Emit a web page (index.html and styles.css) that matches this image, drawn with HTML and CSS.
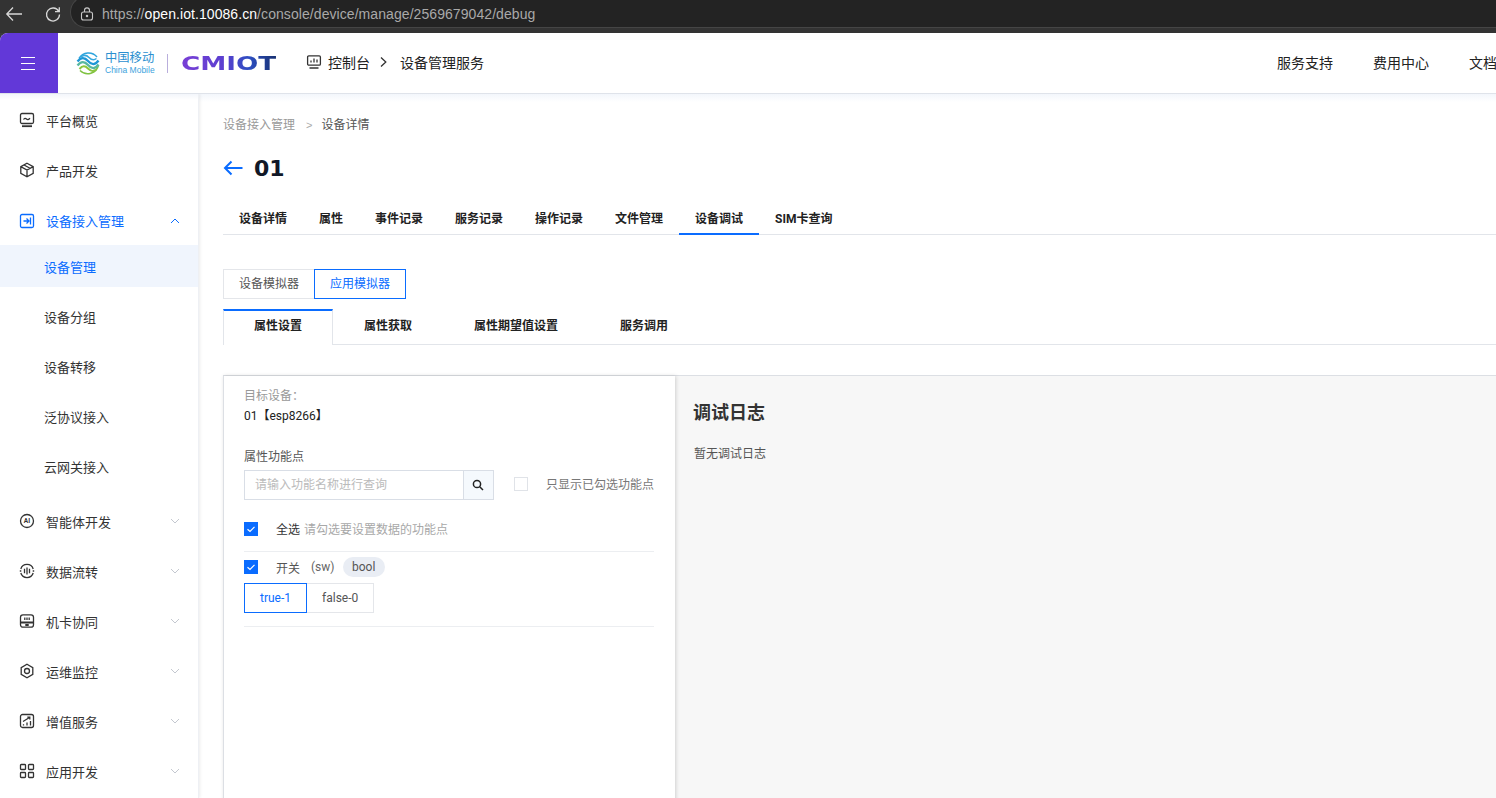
FILE: index.html
```html
<!DOCTYPE html>
<html lang="en">
<head>
  <meta charset="UTF-8" />
  <title>设备调试</title>
  <link rel="stylesheet" href="styles.css">
</head>
<body>
<div class="browser">
  <svg class="br-icon" width="20" height="20" viewBox="0 0 20 20"><path d="M18 10H3M9 3.500 2.800 10 9 16.500"/></svg>
  <svg class="br-icon reload" width="20" height="20" viewBox="0 0 20 20"><path d="M15.600 7.200A6.500 6.500 0 1 0 16.500 10.500M16.300 3.200v4.400h-4.300"/></svg>
  <div class="urlbar">
    <svg class="lock" width="14" height="14" viewBox="0 0 14 14"><rect x="1.500" y="5" width="11" height="8" rx="2"/><path d="M4.500 5V3.400a2.500 2.500 0 0 1 5 0V5"/><circle cx="7" cy="9" r=".7"/></svg>
    <span class="url"><span class="dim">https://</span>open.iot.10086.cn<span class="dim">/console/device/manage/2569679042/debug</span></span>
  </div>
</div>

<header class="topbar">
  <div class="burger"><span></span><span></span><span></span></div>
  <div class="logo">
    <svg class="logo-mark" width="24" height="24" viewBox="0 0 24 24" fill="none">
      <path d="M3 7.500A11 11 0 0 1 21 6" stroke="#2fa4dd" stroke-width="1.500"/>
      <path d="M22.500 14A11 11 0 0 1 4 19.500" stroke="#7fc241" stroke-width="1.500"/>
      <path d="M1.500 10.500C5 6 8.500 6 12 10s7 4.500 10.500-.500" stroke="#1f97d6" stroke-width="2.300"/>
      <path d="M1.500 14.500C5 10 8.500 10 12 14s7 4.500 10.500-.500" stroke="#58b8a0" stroke-width="2.300"/>
      <path d="M3.500 18C6.500 14.500 9 14.500 12 17.500s5 3.500 8 1" stroke="#8cc63f" stroke-width="2"/>
      <path d="M5 6C8 3.500 10.500 4 13 6.500s5 3 7.500 1" stroke="#35a8de" stroke-width="1.600"/>
    </svg>
    <div class="logo-cm">
      <div class="logo-zh">中国移动</div>
      <div class="logo-en">China Mobile</div>
    </div>
    <i class="logo-sep"></i>
    <div class="logo-iot">CMIOT</div>
  </div>
  <div class="crumb-top">
    <svg class="ico" width="16" height="16" viewBox="0 0 16 16"><rect x="1.600" y="1.800" width="12.800" height="9.400" rx="1.200"/><path d="M5 8.500V6.500M8 8.500V4.500M11 8.500V5.500M3.500 14h9"/></svg>
    <span>控制台</span>
    <svg class="ico chev-r" width="9" height="12" viewBox="0 0 9 12"><path d="M2 1.500 6.800 6 2 10.500"/></svg>
    <span>设备管理服务</span>
  </div>
  <nav class="topnav">
    <a>服务支持</a>
    <a>费用中心</a>
    <a>文档</a>
  </nav>
</header>

<div class="layout">
  <aside class="sidebar">
    <div class="menu-item">
      <svg class="ico" width="16" height="16" viewBox="0 0 16 16"><rect x="1.500" y="1.500" width="13" height="10" rx="1.500"/><path d="M4.500 7.500c1-1.500 2-1.500 3-.5s2 .8 3.500-.8"/><path class="thick" d="M3 14.200h10"/></svg>
      <span>平台概览</span>
    </div>
    <div class="menu-item">
      <svg class="ico" width="16" height="16" viewBox="0 0 16 16"><path d="M8 1.300 14.200 4.600V11.400L8 14.700 1.800 11.400V4.600ZM1.800 4.600 8 8l6.200-3.400M8 8v6.700M5 3l6 3.300"/></svg>
      <span>产品开发</span>
    </div>
    <div class="menu-item open">
      <svg class="ico" width="16" height="16" viewBox="0 0 16 16"><rect x="1.500" y="1.500" width="13" height="13" rx="1.500"/><path d="M4.500 8h5M7.500 5.500 10 8l-2.500 2.500M11.500 4.500v7"/></svg>
      <span>设备接入管理</span>
      <svg class="caret" width="10" height="6" viewBox="0 0 10 6"><path d="M1 5 5 1l4 4"/></svg>
    </div>
    <div class="submenu">
      <div class="sub-item active">设备管理</div>
      <div class="sub-item">设备分组</div>
      <div class="sub-item">设备转移</div>
      <div class="sub-item">泛协议接入</div>
      <div class="sub-item">云网关接入</div>
    </div>
    <div class="menu-item">
      <svg class="ico" width="16" height="16" viewBox="0 0 16 16"><circle cx="8" cy="8" r="6.500"/><text class="ai" x="8" y="10.300" text-anchor="middle">AI</text></svg>
      <span>智能体开发</span>
      <svg class="caret" width="10" height="6" viewBox="0 0 10 6"><path d="M1 1l4 4 4-4"/></svg>
    </div>
    <div class="menu-item">
      <svg class="ico" width="16" height="16" viewBox="0 0 16 16"><path d="M1.800 10A6.500 6.500 0 0 0 14.200 10M14.200 6A6.500 6.500 0 0 0 1.800 6M5.500 5.800v4.400M8 4.500v7M10.500 5.800v4.400"/><path d="M.8 8h1.500M13.700 8h1.500"/></svg>
      <span>数据流转</span>
      <svg class="caret" width="10" height="6" viewBox="0 0 10 6"><path d="M1 1l4 4 4-4"/></svg>
    </div>
    <div class="menu-item">
      <svg class="ico" width="16" height="16" viewBox="0 0 16 16"><rect x="1.500" y="1.800" width="13" height="12.400" rx="2.500"/><path class="thick" d="M1.500 9.500h13M6.300 12h3.400"/><path d="M5.800 4.500v2.500M8 4.500v2.500M10.200 4.500v2.500"/></svg>
      <span>机卡协同</span>
      <svg class="caret" width="10" height="6" viewBox="0 0 10 6"><path d="M1 1l4 4 4-4"/></svg>
    </div>
    <div class="menu-item">
      <svg class="ico" width="16" height="16" viewBox="0 0 16 16"><path d="M8 1.300 13.800 4.600V11.400L8 14.700 2.200 11.400V4.600Z"/><circle cx="8" cy="8" r="2.500"/></svg>
      <span>运维监控</span>
      <svg class="caret" width="10" height="6" viewBox="0 0 10 6"><path d="M1 1l4 4 4-4"/></svg>
    </div>
    <div class="menu-item">
      <svg class="ico" width="16" height="16" viewBox="0 0 16 16"><rect x="1.500" y="1.500" width="13" height="13" rx="2"/><path d="M4.500 12.500v-1.200M8 12.500v-3M11.500 12.500V8M4 8.500 10.500 4.500M8.300 4.200h2.500v2.200"/></svg>
      <span>增值服务</span>
      <svg class="caret" width="10" height="6" viewBox="0 0 10 6"><path d="M1 1l4 4 4-4"/></svg>
    </div>
    <div class="menu-item">
      <svg class="ico" width="16" height="16" viewBox="0 0 16 16"><rect x="1.500" y="1.500" width="5" height="5" rx=".8"/><rect x="9.500" y="1.500" width="5" height="5" rx=".8"/><rect x="1.500" y="9.500" width="5" height="5" rx=".8"/><rect x="9.500" y="9.500" width="5" height="5" rx=".8"/></svg>
      <span>应用开发</span>
      <svg class="caret" width="10" height="6" viewBox="0 0 10 6"><path d="M1 1l4 4 4-4"/></svg>
    </div>
  </aside>

  <main class="main">
    <div class="breadcrumb"><span class="bc-link">设备接入管理</span><span class="bc-sep">&gt;</span><span>设备详情</span></div>
    <div class="title-row">
      <svg class="back" width="20" height="16" viewBox="0 0 20 16"><path d="M19.500 8H2M8.500 1.500 2 8l6.500 6.500"/></svg>
      <h1>01</h1>
    </div>

    <div class="tabs">
      <a>设备详情</a><a>属性</a><a>事件记录</a><a>服务记录</a><a>操作记录</a><a>文件管理</a><a class="on">设备调试</a><a>SIM卡查询</a>
    </div>

    <div class="radio-group">
      <a>设备模拟器</a><a class="on">应用模拟器</a>
    </div>

    <div class="card-tabs">
      <a class="on">属性设置</a><a>属性获取</a><a>属性期望值设置</a><a>服务调用</a>
    </div>

    <div class="debug">
      <section class="form-panel">
        <div class="label-gray">目标设备：</div>
        <div class="device-name">01【esp8266】</div>
        <div class="label">属性功能点</div>
        <div class="search-row">
          <div class="search-input">请输入功能名称进行查询</div>
          <div class="search-btn">
            <svg width="12" height="12" viewBox="0 0 12 12"><circle cx="5" cy="5" r="3.600"/><path d="M7.700 7.700 11 11"/></svg>
          </div>
          <span class="check off"></span>
          <span class="only">只显示已勾选功能点</span>
        </div>
        <div class="all-row">
          <span class="check"><svg width="14" height="14" viewBox="0 0 14 14"><path d="M3.500 7.200 6 9.500l4.500-4.700"/></svg></span>
          <span class="check-text">全选</span>
          <span class="hint">请勾选要设置数据的功能点</span>
        </div>
        <div class="prop">
          <div class="prop-head">
            <span class="check"><svg width="14" height="14" viewBox="0 0 14 14"><path d="M3.500 7.200 6 9.500l4.500-4.700"/></svg></span>
            <span class="prop-name">开关</span>
            <span class="prop-id">(sw)</span>
            <span class="pill">bool</span>
          </div>
          <div class="value-group">
            <a class="on">true-1</a><a>false-0</a>
          </div>
        </div>
      </section>
      <section class="log-panel">
        <h3>调试日志</h3>
        <p>暂无调试日志</p>
      </section>
    </div>
  </main>
</div>
</body>
</html>
```

FILE: styles.css
```css
* {
  box-sizing: border-box;
}

html, body {
  height: 100%;
}

body {
  margin: 0;
  width: 1496px;
  height: 798px;
  overflow: hidden;
  background: #3a3a3a;
  font-family: Roboto, "Noto Sans CJK SC", sans-serif;
  font-size: 12px;
  color: #222;
}

svg {
  fill: none;
  display: block;
  flex-shrink: 0;
}

/* browser chrome */
.browser {
  height: 33px;
  background: #333;
  display: flex;
  align-items: flex-start;
  padding-left: 4px;
}

.br-icon {
  stroke: #d8d8d8;
  stroke-width: 1.300;
  margin-top: 4px;
}

.br-icon.reload {
  margin-left: 19px;
}

.urlbar {
  margin-left: 7px;
  margin-top: -4px;
  flex: 1;
  height: 32px;
  border: 1px solid #454545;
  border-right: 0;
  border-radius: 16px 0 0 16px;
  background: #232323;
  display: flex;
  align-items: center;
  padding: 3px 0 0 9px;
}

.lock {
  stroke: #c9c9c9;
  stroke-width: 1.100;
}

.url {
  margin-left: 8px;
  font-family: "Liberation Sans", sans-serif;
  font-size: 14px;
  letter-spacing: 0.07px;
  color: #fff;
}

.url .dim {
  color: #a9a9a9;
}

/* header */
.topbar {
  height: 61px;
  background: #fff;
  border-bottom: 1px solid #dfe3ea;
  border-radius: 8px 0 0 0;
  display: flex;
  align-items: center;
  overflow: hidden;
}

.burger {
  width: 58px;
  height: 60px;
  padding-right: 2px;
  background: #6238d8;
  display: flex;
  flex-direction: column;
  justify-content: center;
  align-items: center;
  gap: 5px;
}

.burger span {
  width: 14px;
  height: 1px;
  background: #fff;
}

.logo {
  margin-left: 18px;
  display: flex;
  align-items: center;
  width: 230px;
}

.logo-cm {
  margin-left: 5px;
  width: 51px;
  color: #2b8fd0;
}

.logo-zh {
  font-size: 12.300px;
  line-height: 14px;
  white-space: nowrap;
}

.logo-en {
  font-family: "Liberation Sans", sans-serif;
  font-size: 8.500px;
  line-height: 10px;
  color: #3aa2dd;
  white-space: nowrap;
}

.logo-sep {
  width: 1px;
  height: 19px;
  background: #b9aedc;
  margin: 0 13px 0 11px;
}

.logo-iot {
  font-family: "DejaVu Sans", sans-serif;
  font-weight: 700;
  font-size: 20px;
  line-height: 20px;
  width: 73px;
  transform: scaleX(1.310);
  transform-origin: left center;
  background: linear-gradient(to right, #7a3fd6 0%, #5a3fd0 45%, #2c4ec0 72%, #17306f 100%);
  -webkit-background-clip: text;
  background-clip: text;
  color: transparent;
}

.ico {
  stroke: #333;
  stroke-width: 1.300;
}

.ico .thick {
  stroke-width: 1.800;
}

.ico .ai {
  fill: #333;
  stroke: none;
  font-size: 6.500px;
  font-weight: 700;
}

.crumb-top {
  display: flex;
  align-items: center;
  font-size: 14px;
  color: #222;
  padding-bottom: 2px;
}

.crumb-top span:first-of-type {
  margin-left: 6px;
}

.crumb-top .chev-r {
  margin: 0 12px 0 9px;
}

.topnav {
  margin-left: auto;
  margin-right: -1px;
  padding-bottom: 2px;
  display: flex;
  gap: 40px;
  font-size: 14px;
  flex-shrink: 0;
}

/* page */
.layout {
  display: flex;
  height: 704px;
  background: #fff;
  overflow: hidden;
}

.sidebar {
  width: 199px;
  flex-shrink: 0;
  padding-top: 1px;
  background: linear-gradient(to bottom, #f3f6fb 0, #fff 6px);
  border-right: 1px solid #eef0f4;
  box-shadow: 1px 0 3px rgba(0, 0, 0, 0.08);
  z-index: 1;
}

.menu-item {
  height: 50px;
  display: flex;
  align-items: center;
  padding-left: 19px;
  font-size: 13px;
  color: #333;
}

.menu-item span {
  margin-left: 11px;
}

.menu-item .caret {
  margin-left: auto;
  margin-right: 18px;
  stroke: #c4c8d0;
  stroke-width: 1;
}

.menu-item.open {
  height: 49px;
  margin-top: 1px;
  color: #0a6cff;
}

.menu-item.open .ico, .menu-item.open .caret {
  stroke: #0a6cff;
}

.submenu {
  padding-bottom: 4px;
}

.sub-item {
  height: 50px;
  line-height: 51px;
  padding-left: 44px;
  font-size: 13px;
  color: #333;
}

.sub-item.active {
  height: 42px;
  line-height: 45px;
  margin-bottom: 5px;
  background: #f0f5fd;
  color: #0a6cff;
}

.main {
  flex: 1;
  min-width: 0;
  padding: 21px 0 0 24px;
  background: linear-gradient(to bottom, #f3f6fb 0, #fff 8px);
}

.breadcrumb {
  height: 20px;
  line-height: 20px;
  color: #999;
  display: flex;
}

.breadcrumb span:last-child {
  color: #555;
}

.bc-sep {
  margin: 0 9px 0 11px;
  color: #aaa;
  font-family: "Liberation Sans", sans-serif;
  font-size: 11px;
}

.title-row {
  margin-top: 21px;
  height: 24px;
  display: flex;
  align-items: center;
}

.back {
  stroke: #0a6cff;
  stroke-width: 2;
}

.title-row h1 {
  margin: 0 0 0 11px;
  font-family: "DejaVu Sans", sans-serif;
  font-size: 22px;
  font-weight: 700;
  color: #111827;
}

.tabs {
  margin-top: 24px;
  height: 31px;
  display: flex;
  border-bottom: 1px solid #e2e5ea;
}

.tabs a {
  padding: 0 16px;
  line-height: 30px;
  font-weight: 700;
  color: #222;
  white-space: nowrap;
}

.tabs a.on {
  border-bottom: 2px solid #0a6cff;
  height: 31px;
}

.radio-group {
  margin-top: 34px;
  display: flex;
}

.radio-group a {
  height: 30px;
  line-height: 28px;
  padding: 0 15px;
  border: 1px solid #e4e6ea;
  color: #555;
}

.radio-group a.on {
  margin-left: -1px;
  border-color: #0a6cff;
  color: #0a6cff;
}

.card-tabs {
  margin-top: 10px;
  height: 36px;
  display: flex;
  border-bottom: 1px solid #e2e5ea;
}

.card-tabs a {
  padding: 0 31px;
  line-height: 34px;
  font-weight: 700;
  color: #222;
  white-space: nowrap;
}

.card-tabs a.on {
  width: 110px;
  height: 36px;
  line-height: 30px;
  background: #fff;
  border-top: 2px solid #0a6cff;
  border-left: 1px solid #e2e5ea;
  border-right: 1px solid #e2e5ea;
  padding: 0 30px;
}

.debug {
  margin-top: 30px;
  display: flex;
  height: 500px;
  border-top: 1px solid #dcdfe4;
}

.form-panel {
  width: 452px;
  border-left: 1px solid #dcdfe4;
  padding: 12px 21px 0 20px;
  background: #fff;
  box-shadow: 1px 0 4px rgba(0, 0, 0, 0.16);
  z-index: 1;
}

.label-gray {
  line-height: 16px;
  color: #999;
}

.device-name {
  margin-top: 4px;
  line-height: 16px;
  color: #222;
}

.label {
  margin-top: 25px;
  line-height: 16px;
  color: #555;
}

.search-row {
  margin-top: 5px;
  display: flex;
  align-items: center;
}

.search-input {
  width: 220px;
  height: 30px;
  line-height: 28px;
  padding-left: 10px;
  border: 1px solid #d9dee6;
  color: #bbb;
}

.search-btn {
  width: 30px;
  height: 30px;
  border: 1px solid #d9dee6;
  border-left: 0;
  background: #f5f9fd;
  display: flex;
  align-items: center;
  justify-content: center;
}

.search-btn svg {
  stroke: #222;
  stroke-width: 1.500;
}

.check {
  width: 14px;
  height: 14px;
  background: #0a6cff;
  flex-shrink: 0;
}

.check svg {
  stroke: #fff;
  stroke-width: 1.200;
}

.check.off {
  margin: 0 0 2px 20px;
  background: #fff;
  border: 1px solid #e0e3e8;
}

.only {
  margin: 0 0 4px 18px;
  color: #777;
  white-space: nowrap;
}

.all-row {
  margin-top: 22px;
  height: 14px;
  display: flex;
  align-items: center;
}

.check-text {
  margin: 0 0 2px 18px;
  color: #333;
}

.hint {
  margin: 0 0 2px 4px;
  color: #a8a8a8;
}

.prop {
  margin-top: 15px;
  border-top: 1px solid #eceef1;
  border-bottom: 1px solid #eceef1;
  padding: 5px 0 13px;
}

.prop-head {
  height: 20px;
  display: flex;
  align-items: center;
}

.prop-name {
  margin-left: 18px;
  color: #555;
}

.prop-id {
  margin-left: 11px;
  color: #666;
}

.pill {
  margin-left: 8px;
  height: 20px;
  line-height: 20px;
  padding: 0 9.500px;
  border-radius: 10px;
  background: #e9edf4;
  color: #555;
}

.value-group {
  margin-top: 6px;
  display: flex;
}

.value-group a {
  height: 30px;
  line-height: 28px;
  padding: 0 15px;
  border: 1px solid #e4e6ea;
  color: #555;
}

.value-group a + a {
  margin-left: -1px;
}

.value-group a.on {
  position: relative;
  z-index: 1;
  border-color: #0a6cff;
  color: #0a6cff;
}

.log-panel {
  flex: 1;
  background: #f7f7f7;
  padding: 26px 18px 0 19px;
}

.log-panel h3 {
  margin: 0 0 0 -1px;
  font-size: 18px;
  line-height: 22px;
  font-weight: 700;
  color: #333;
}

.log-panel p {
  margin: 22px 0 0;
  line-height: 16px;
  color: #555;
}
```
